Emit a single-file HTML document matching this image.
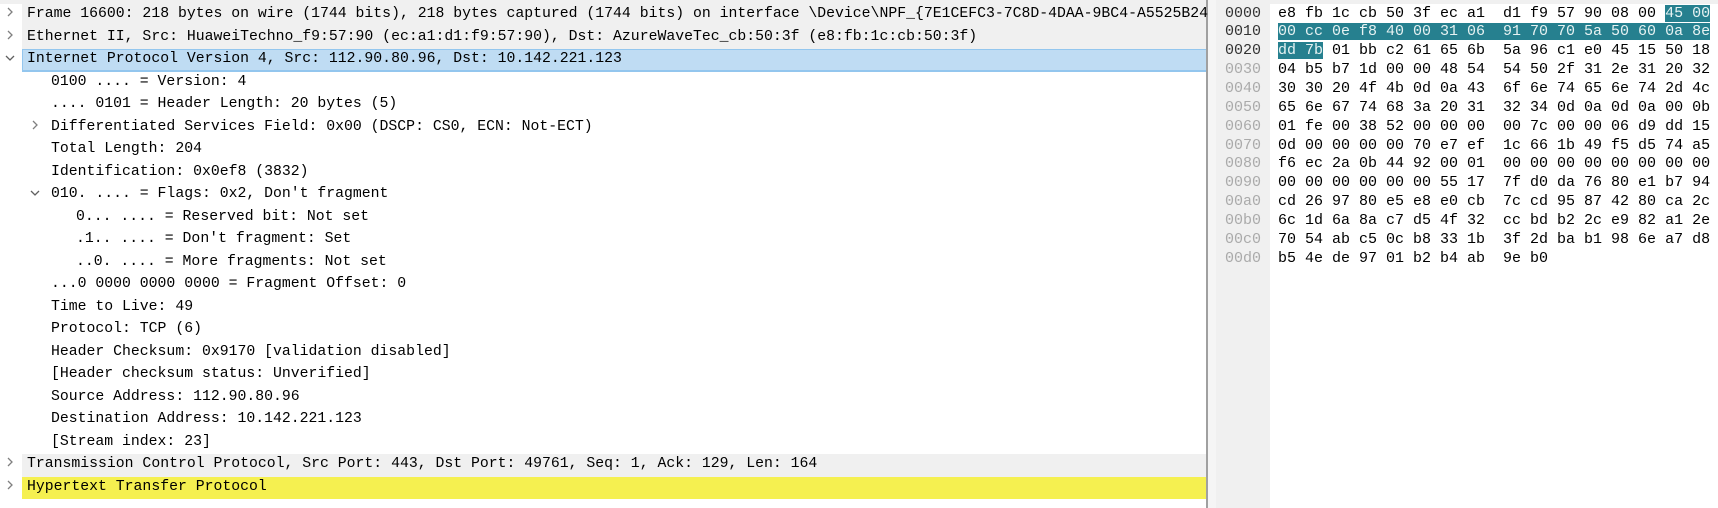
<!DOCTYPE html>
<html><head><meta charset="utf-8"><style>
body{margin:0;width:1718px;height:508px;overflow:hidden;background:#fff;position:relative;font-family:"Liberation Mono",monospace;}
.r{position:absolute;left:22px;width:1184px;height:22.5px;line-height:22.5px;font-size:14.8px;color:#000;white-space:pre;}
.g{background:#f0f0f0}
.s{background:#bfdcf3;box-shadow:inset 0 1px 0 #93c6ee,inset 1px 0 0 #93c6ee,inset 0 -2px 0 #93c6ee}
.y{background:#f5f050}
.t{position:absolute;top:-1px}
.a{position:absolute;top:3px}
.h{position:absolute;left:1278px;height:18.85px;line-height:18.85px;font-size:15px;white-space:pre;color:#000}
.o{position:absolute;left:1225px;height:18.85px;line-height:18.85px;font-size:15px;color:#aaa}
.k{background:#26808f;color:#e6f2f2}
</style></head><body>
<div style="position:absolute;left:0;top:0;width:1718px;height:4px;background:#f0f0f0"></div>
<div style="position:absolute;left:1206px;top:0;width:2px;height:508px;background:#a0a0a0"></div>
<div style="position:absolute;left:1208px;top:0;width:62px;height:508px;background:#f0f0f0"></div>
<div style="position:absolute;left:1208px;top:0;width:8px;height:508px;background:#f5f5f5"></div>

<div class="r g" style="top:4px"><svg class="a" style="left:-15px" width="8" height="10"><polyline points="1,1 5,5 1,9" fill="none" stroke="#808080" stroke-width="1.3"/></svg><span class="t" style="left:5px">Frame 16600: 218 bytes on wire (1744 bits), 218 bytes captured (1744 bits) on interface \Device\NPF_{7E1CEFC3-7C8D-4DAA-9BC4-A5525B24</span></div>
<div class="r g" style="top:26.5px"><svg class="a" style="left:-15px" width="8" height="10"><polyline points="1,1 5,5 1,9" fill="none" stroke="#808080" stroke-width="1.3"/></svg><span class="t" style="left:5px">Ethernet II, Src: HuaweiTechno_f9:57:90 (ec:a1:d1:f9:57:90), Dst: AzureWaveTec_cb:50:3f (e8:fb:1c:cb:50:3f)</span></div>
<div class="r s" style="top:49px"><svg class="a" style="left:-17px;top:5px" width="10" height="8"><polyline points="1,2 5,6 9,2" fill="none" stroke="#606060" stroke-width="1.3"/></svg><span class="t" style="left:5px">Internet Protocol Version 4, Src: 112.90.80.96, Dst: 10.142.221.123</span></div>
<div class="r" style="top:71.5px"><span class="t" style="left:29px">0100 .... = Version: 4</span></div>
<div class="r" style="top:94px"><span class="t" style="left:29px">.... 0101 = Header Length: 20 bytes (5)</span></div>
<div class="r" style="top:116.5px"><svg class="a" style="left:10px" width="8" height="10"><polyline points="1,1 5,5 1,9" fill="none" stroke="#808080" stroke-width="1.3"/></svg><span class="t" style="left:29px">Differentiated Services Field: 0x00 (DSCP: CS0, ECN: Not-ECT)</span></div>
<div class="r" style="top:139px"><span class="t" style="left:29px">Total Length: 204</span></div>
<div class="r" style="top:161.5px"><span class="t" style="left:29px">Identification: 0x0ef8 (3832)</span></div>
<div class="r" style="top:184px"><svg class="a" style="left:8px;top:5px" width="10" height="8"><polyline points="1,2 5,6 9,2" fill="none" stroke="#606060" stroke-width="1.3"/></svg><span class="t" style="left:29px">010. .... = Flags: 0x2, Don't fragment</span></div>
<div class="r" style="top:206.5px"><span class="t" style="left:54px">0... .... = Reserved bit: Not set</span></div>
<div class="r" style="top:229px"><span class="t" style="left:54px">.1.. .... = Don't fragment: Set</span></div>
<div class="r" style="top:251.5px"><span class="t" style="left:54px">..0. .... = More fragments: Not set</span></div>
<div class="r" style="top:274px"><span class="t" style="left:29px">...0 0000 0000 0000 = Fragment Offset: 0</span></div>
<div class="r" style="top:296.5px"><span class="t" style="left:29px">Time to Live: 49</span></div>
<div class="r" style="top:319px"><span class="t" style="left:29px">Protocol: TCP (6)</span></div>
<div class="r" style="top:341.5px"><span class="t" style="left:29px">Header Checksum: 0x9170 [validation disabled]</span></div>
<div class="r" style="top:364px"><span class="t" style="left:29px">[Header checksum status: Unverified]</span></div>
<div class="r" style="top:386.5px"><span class="t" style="left:29px">Source Address: 112.90.80.96</span></div>
<div class="r" style="top:409px"><span class="t" style="left:29px">Destination Address: 10.142.221.123</span></div>
<div class="r" style="top:431.5px"><span class="t" style="left:29px">[Stream index: 23]</span></div>
<div class="r g" style="top:454px"><svg class="a" style="left:-15px" width="8" height="10"><polyline points="1,1 5,5 1,9" fill="none" stroke="#808080" stroke-width="1.3"/></svg><span class="t" style="left:5px">Transmission Control Protocol, Src Port: 443, Dst Port: 49761, Seq: 1, Ack: 129, Len: 164</span></div>
<div class="r y" style="top:476.5px"><svg class="a" style="left:-15px" width="8" height="10"><polyline points="1,1 5,5 1,9" fill="none" stroke="#808080" stroke-width="1.3"/></svg><span class="t" style="left:5px">Hypertext Transfer Protocol</span></div>

<div class="o" style="top:4.6px;color:#333">0000</div><div class="h" style="top:4.6px">e8 fb 1c cb 50 3f ec a1  d1 f9 57 90 08 00 <span class="k">45 00</span></div>
<div class="o" style="top:23.45px;color:#333">0010</div><div class="h" style="top:23.45px"><span class="k">00 cc 0e f8 40 00 31 06  91 70 70 5a 50 60 0a 8e</span></div>
<div class="o" style="top:42.3px;color:#333">0020</div><div class="h" style="top:42.3px"><span class="k">dd 7b</span> 01 bb c2 61 65 6b  5a 96 c1 e0 45 15 50 18</div>
<div class="o" style="top:61.15px">0030</div><div class="h" style="top:61.15px">04 b5 b7 1d 00 00 48 54  54 50 2f 31 2e 31 20 32</div>
<div class="o" style="top:80px">0040</div><div class="h" style="top:80px">30 30 20 4f 4b 0d 0a 43  6f 6e 74 65 6e 74 2d 4c</div>
<div class="o" style="top:98.85px">0050</div><div class="h" style="top:98.85px">65 6e 67 74 68 3a 20 31  32 34 0d 0a 0d 0a 00 0b</div>
<div class="o" style="top:117.7px">0060</div><div class="h" style="top:117.7px">01 fe 00 38 52 00 00 00  00 7c 00 00 06 d9 dd 15</div>
<div class="o" style="top:136.55px">0070</div><div class="h" style="top:136.55px">0d 00 00 00 00 70 e7 ef  1c 66 1b 49 f5 d5 74 a5</div>
<div class="o" style="top:155.4px">0080</div><div class="h" style="top:155.4px">f6 ec 2a 0b 44 92 00 01  00 00 00 00 00 00 00 00</div>
<div class="o" style="top:174.25px">0090</div><div class="h" style="top:174.25px">00 00 00 00 00 00 55 17  7f d0 da 76 80 e1 b7 94</div>
<div class="o" style="top:193.1px">00a0</div><div class="h" style="top:193.1px">cd 26 97 80 e5 e8 e0 cb  7c cd 95 87 42 80 ca 2c</div>
<div class="o" style="top:211.95px">00b0</div><div class="h" style="top:211.95px">6c 1d 6a 8a c7 d5 4f 32  cc bd b2 2c e9 82 a1 2e</div>
<div class="o" style="top:230.8px">00c0</div><div class="h" style="top:230.8px">70 54 ab c5 0c b8 33 1b  3f 2d ba b1 98 6e a7 d8</div>
<div class="o" style="top:249.65px">00d0</div><div class="h" style="top:249.65px">b5 4e de 97 01 b2 b4 ab  9e b0</div>
</body></html>
